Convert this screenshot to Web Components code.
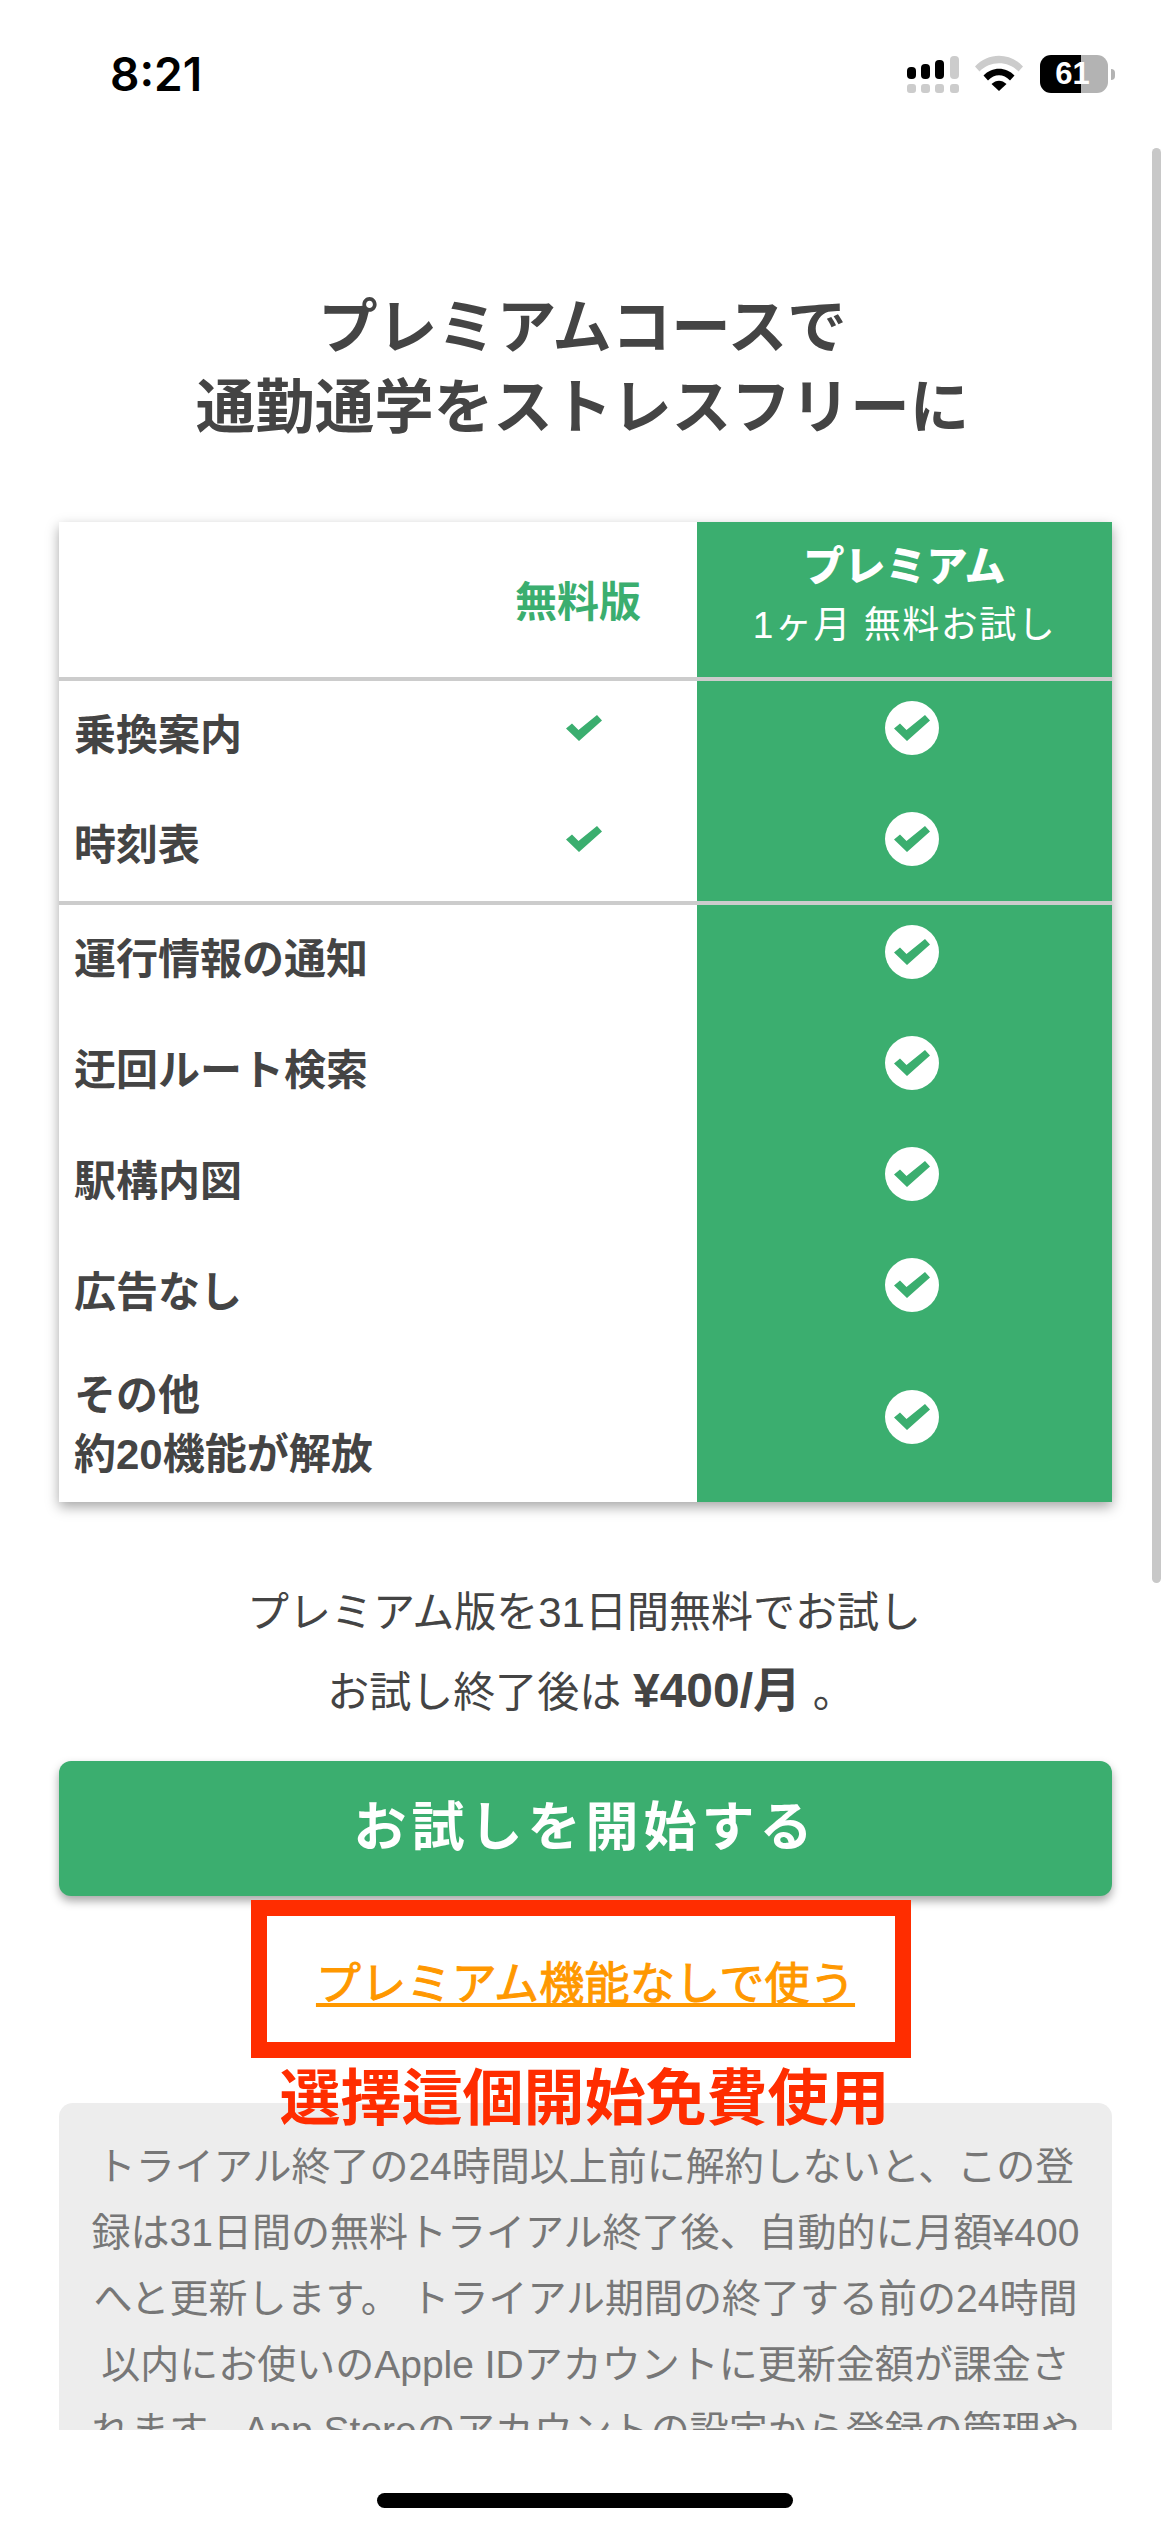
<!DOCTYPE html>
<html lang="ja">
<head>
<meta charset="utf-8">
<title>プレミアムコース</title>
<style>
  html, body { margin: 0; padding: 0; background: #fff; }
  body {
    width: 1170px;
    height: 2532px;
    overflow: hidden;
    font-family: "Liberation Sans", "Noto Sans CJK JP", sans-serif;
  }
</style>
</head>
<body>
<phone-screen>
  <status-bar slot="top" time="8:21" battery="61"></status-bar>
  <plan-title>プレミアムコースで<br>通勤通学をストレスフリーに</plan-title>
  <plan-table>
    <plan-row kind="head"></plan-row>
    <plan-row free>乗換案内</plan-row>
    <plan-row free kind="end">時刻表</plan-row>
    <plan-row>運行情報の通知</plan-row>
    <plan-row>迂回ルート検索</plan-row>
    <plan-row>駅構内図</plan-row>
    <plan-row>広告なし</plan-row>
    <plan-row kind="tall">その他<br>約20機能が解放</plan-row>
  </plan-table>
  <price-note>プレミアム版を31日間無料でお試し<br><span>お試し終了後は <b>¥400/月</b> 。</span></price-note>
  <start-button>お試しを開始する</start-button>
  <skip-link note="選擇這個開始免費使用">プレミアム機能なしで使う</skip-link>
  <legal-note>トライアル終了の24時間以上前に解約しないと、この登<br>録は31日間の無料トライアル終了後、自動的に月額¥400<br>へと更新します。 トライアル期間の終了する前の24時間<br>以内にお使いのApple IDアカウントに更新金額が課金さ<br>れます。App Storeのアカウントの設定から登録の管理や</legal-note>
</phone-screen>

<script>
const GREEN = '#3bae6f';

function define(name, css, html) {
  class Component extends HTMLElement {
    constructor() {
      super();
      this.attachShadow({mode: 'open'});
      this.shadowRoot.innerHTML = '<style>' + css + '</style>' + (typeof html == 'function' ? html(this) : html);
    }
  }
  window.customElements.define(name, Component);
}

define('phone-screen', `
  :host { display: flex; flex-direction: column; position: relative; width: 1170px; height: 2532px; background: #fff; }
  .content { height: 2310px; overflow: hidden; padding: 0 58px 0 59px; box-sizing: border-box; flex: none; }
  .home { flex: 1; display: flex; justify-content: center; padding-top: 63px; box-sizing: border-box; }
  .home i { display: block; width: 416px; height: 15px; border-radius: 8px; background: #000; }
  .scroll { position: absolute; left: 1152px; top: 148px; width: 9px; height: 1435px; border-radius: 5px; background: #c8c8c8; }
`, `
  <slot name="top"></slot>
  <div class="content"><slot></slot></div>
  <div class="home"><i></i></div>
  <div class="scroll"></div>
`);

define('status-bar', `
  :host { display: flex; align-items: flex-start; height: 120px; padding: 55px 55px 0 110px; box-sizing: border-box; flex: none; }
  .time { font: 600 46px/38px Inter, "Liberation Sans", sans-serif; color: #000; margin-right: auto; }
  .icons { display: flex; align-items: flex-start; }
  svg { display: block; }
  .battery { display: flex; align-items: center; margin-left: 17px; }
  .cell {
    width: 68px; height: 38px; border-radius: 11px; color: #fff;
    background: linear-gradient(90deg, #000 0 41px, #b3b3b3 41px);
    font: 700 31px/38px "Liberation Sans", sans-serif; text-align: center; padding-right: 3px; box-sizing: border-box;
  }
  .nub { width: 4px; height: 11px; margin-left: 3px; border-radius: 0 5px 5px 0; background: #b3b3b3; }
`, el => `
  <span class="time">${el.getAttribute('time')}</span>
  <div class="icons">
    <svg width="52" height="38" viewBox="0 0 52 38" style="margin-right:16px">
      <g fill="#000"><rect x="0" y="12" width="9" height="12" rx="4"/><rect x="14" y="9" width="9" height="15" rx="4"/><rect x="28" y="5" width="9" height="19" rx="4"/></g>
      <rect x="43" y="1" width="9" height="23" rx="4" fill="#ccc"/>
      <g fill="#ccc"><rect x="0" y="29" width="9" height="9" rx="3"/><rect x="14" y="29" width="9" height="9" rx="3"/><rect x="28" y="29" width="9" height="9" rx="3"/><rect x="43" y="29" width="9" height="9" rx="3"/></g>
    </svg>
    <svg width="48" height="36" viewBox="0 0 48 36">
      <path d="M0 11.500C13-3 35-3 48 11.500L43.500 16.500C33 5.500 15 5.500 4.500 16.500Z" fill="#ccc"/>
      <path d="M8.500 20.500C17 11.500 31 11.500 39.500 20.500L35 25.500C28.500 18.500 19.500 18.500 13 25.500Z" fill="#000"/>
      <path d="M16.500 29C21 24.500 27 24.500 31.500 29L24 36Z" fill="#000"/>
    </svg>
    <div class="battery"><div class="cell">${el.getAttribute('battery')}</div><div class="nub"></div></div>
  </div>
`);

define('plan-title', `
  :host { display: block; text-align: center; font-weight: 700; font-size: 59.500px; line-height: 80px; color: #444; padding: 168px 6px 0 0; margin-bottom: 74px; }
`, `<slot></slot>`);

define('plan-table', `
  :host { display: block; box-shadow: 0 5px 12px rgba(0,0,0,.35); background: #fff; }
`, `<slot></slot>`);

const check = `<svg viewBox="0 0 36 26" width="36" height="26"><path d="M0 13.500L6 8.500L12.500 15L31 0L36 5.500L13 26Z" fill="${GREEN}"/></svg>`;

define('plan-row', `
  :host { display: grid; grid-template-columns: 638px 415px; color: #444; font-size: 42px; font-weight: 700; line-height: 59px; }
  :host([kind="head"]) { height: 155px; border-bottom: 4px solid #ccc; }
  :host([kind="end"]) { border-bottom: 4px solid #ccc; }
  .left { display: flex; align-items: center; height: 111px; padding-left: 15px; box-sizing: border-box; position: relative; }
  .right { background: ${GREEN}; display: flex; justify-content: center; padding: 20px 0 0 15px; box-sizing: border-box; }
  .mark { display: flex; align-items: center; justify-content: center; width: 54px; height: 54px; border-radius: 50%; background: #fff; }
  .free { position: absolute; left: 507px; top: 34px; line-height: 0; }
  .label { position: relative; top: -1px; }
  :host([kind="end"]) .left { height: 109px; }
  :host([kind="tall"]) .left { height: 153px; }
  :host([kind="tall"]) .right { padding-top: 41px; }
  .head-free { color: ${GREEN}; position: absolute; left: 456px; top: 51px; white-space: nowrap; }
  .head-right { display: flex; flex-direction: column; align-items: center; color: #fff; height: 155px; background: ${GREEN}; padding-top: 16px; box-sizing: border-box; }
  .head-right b { font-size: 41px; line-height: 58px; }
  .head-right span { font-size: 37px; font-weight: 400; line-height: 60px; letter-spacing: 1.500px; }
`, el => el.getAttribute('kind') == 'head' ? `
  <div class="left" style="height:155px"><span class="head-free">無料版</span></div>
  <div class="head-right"><b>プレミアム</b><span>1ヶ月 無料お試し</span></div>
` : `
  <div class="left"><span class="label"><slot></slot></span>${el.hasAttribute('free') ? '<span class="free">' + check + '</span>' : ''}</div>
  <div class="right"><span class="mark">${check}</span></div>
`);

define('price-note', `
  :host { display: block; text-align: center; font-size: 42px; line-height: 78px; color: #444; padding: 72px 3px 0 0; margin-bottom: 29px; }
  ::slotted(span) { margin-left: 14px; }
`, `<slot></slot>`);

define('start-button', `
  :host { display: flex; align-items: center; justify-content: center; height: 135px; padding-bottom: 12px; box-sizing: border-box; border-radius: 12px; background: ${GREEN}; color: #fff; font-size: 53px; font-weight: 700; letter-spacing: 5px; box-shadow: 0 5px 10px rgba(0,0,0,.35); }
`, `<slot></slot>`);

define('skip-link', `
  :host { display: block; position: relative; height: 207px; text-align: center; }
  a { display: inline-block; margin-top: 56px; font-size: 45px; line-height: 66px; letter-spacing: .3px; color: #ff9800; -webkit-text-stroke: 1px #ff9800; text-decoration: underline; text-decoration-thickness: 4px; text-underline-offset: 3px; }
  .box { position: absolute; left: 192px; top: 4px; width: 660px; height: 158px; border: 16px solid #ff2d00; box-sizing: border-box; }
  .note { position: absolute; left: 0; right: 2px; top: 160px; font: 700 61px/76px "Noto Sans CJK TC", sans-serif; color: #ff2d00; z-index: 2; }
`, el => `
  <a><slot></slot></a>
  <div class="box"></div>
  <div class="note">${el.getAttribute('note')}</div>
`);

define('legal-note', `
  :host { display: block; background: #ededed; border-radius: 14px 14px 0 0; color: #777; font-size: 39px; line-height: 66px; text-align: center; padding-top: 31px; white-space: nowrap; }
`, `<slot></slot>`);
</script>
<style>
  price-note b { font-weight: 700; font-size: 48px; }
</style>
</body>
</html>
